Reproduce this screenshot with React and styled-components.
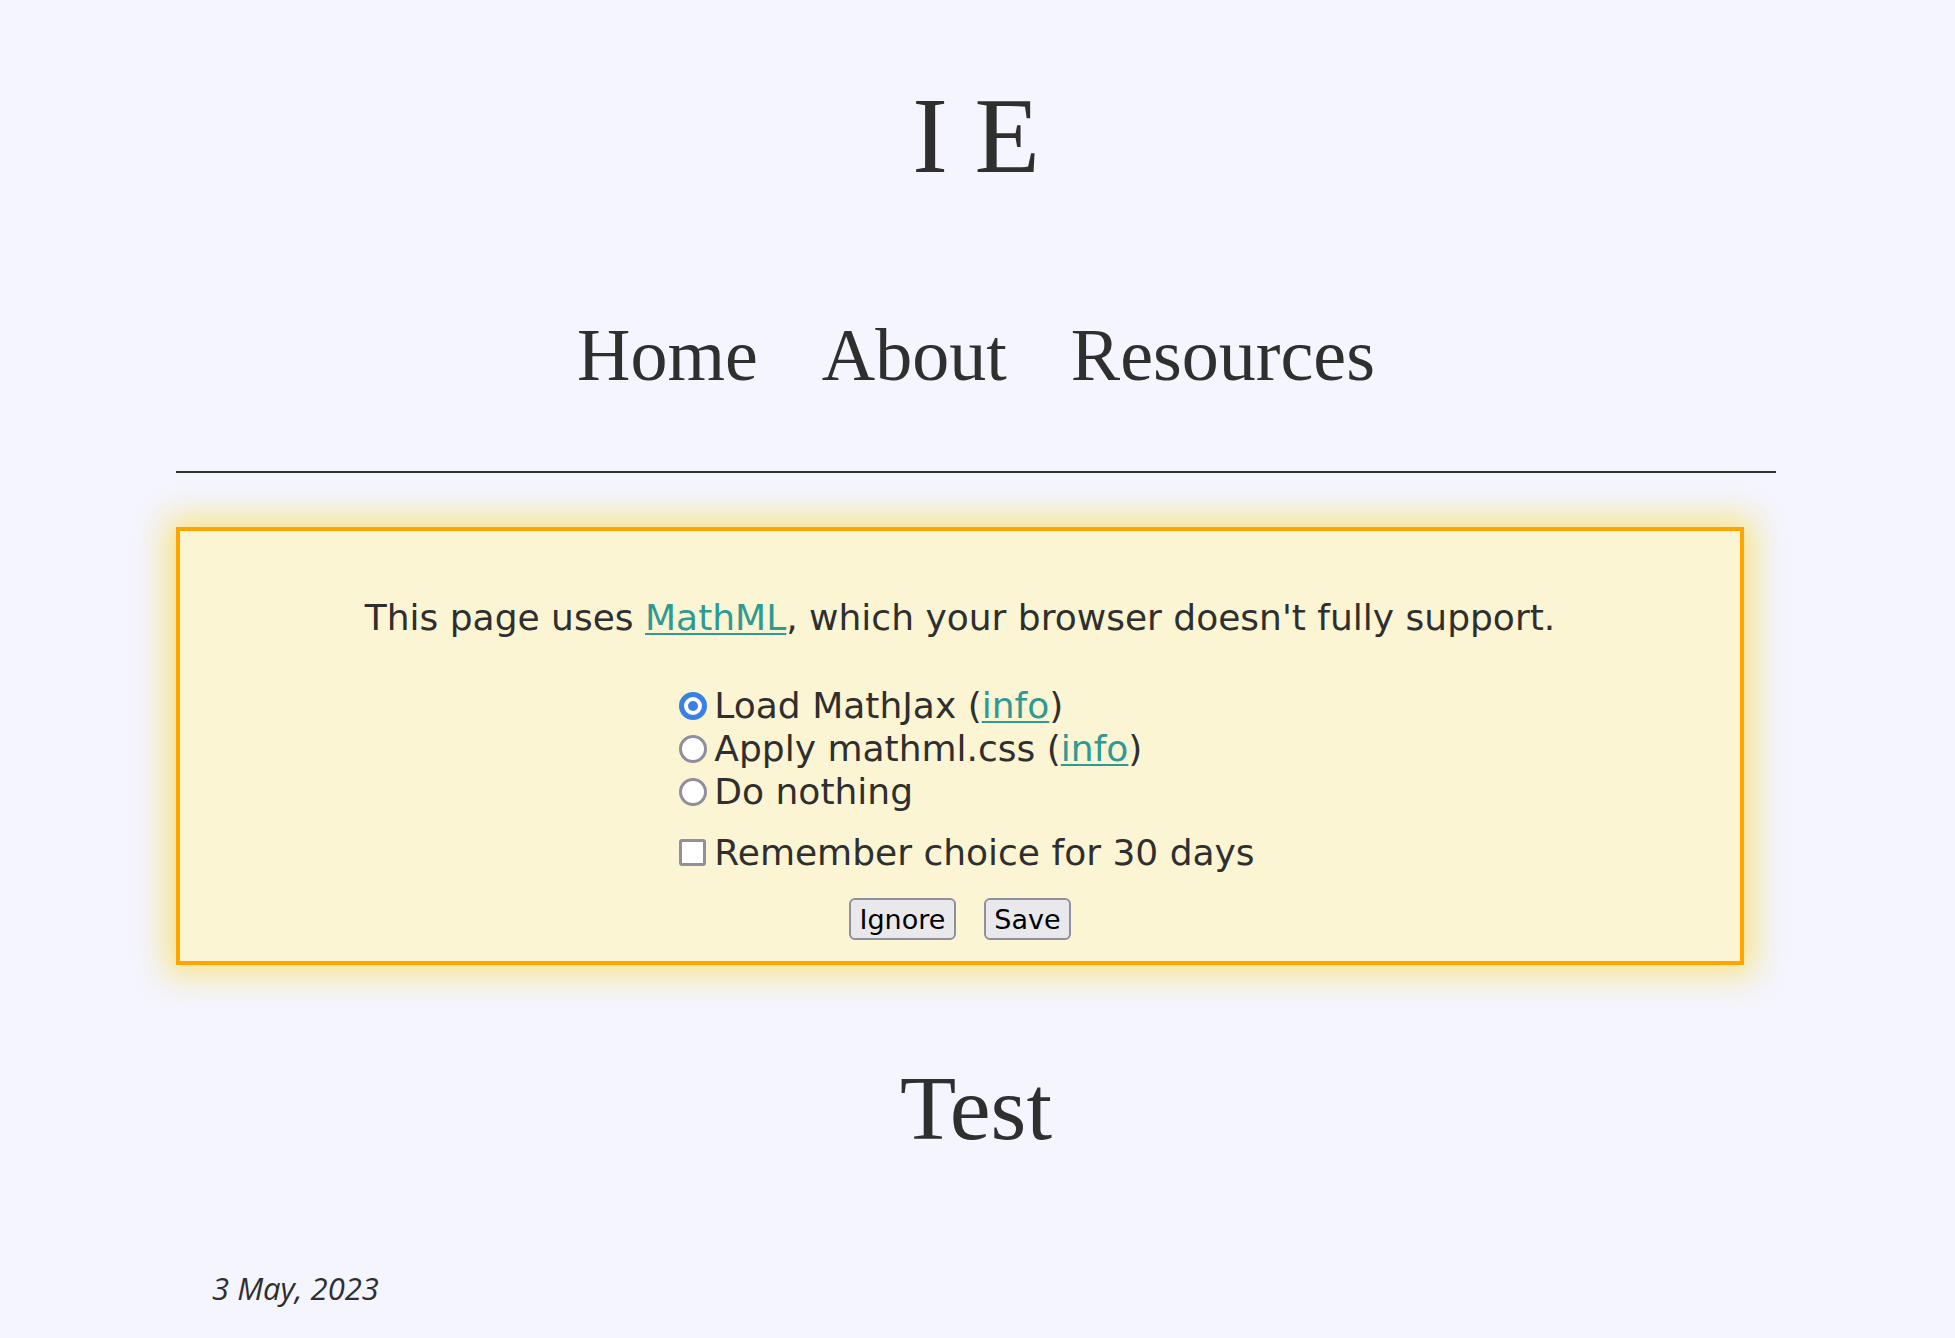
import React from "react";
import styled, { createGlobalStyle } from "styled-components";

const Global = createGlobalStyle`
  html, body { margin: 0; padding: 0; background: #f4f5fe; }
  body { color: #2f2f2f; font-family: "DejaVu Sans", sans-serif; }
`;

const Page = styled.div`
  width: 1600px;
  margin: 0 0 0 calc(50% - 801.5px);
  padding: 83px 0 40px;
  box-sizing: border-box;
`;

const Title = styled.h1`
  margin: 0;
  font-family: "Liberation Serif", serif;
  font-weight: normal;
  font-size: 107px;
  line-height: 1;
  text-align: center;
  color: #2f2f2f;
`;

const Nav = styled.nav`
  display: flex;
  justify-content: center;
  gap: 64px;
  margin-top: 128px;
`;

const NavLink = styled.a`
  font-family: "Liberation Serif", serif;
  font-size: 74px;
  line-height: 1;
  color: #2f2f2f;
  text-decoration: none;
`;

const Rule = styled.hr`
  margin: 79px 0 0;
  border: 0;
  border-top: 2px solid #2f2f2f;
  height: 0;
`;

const Notice = styled.section`
  margin: 54px 32px 0 0;
  border: 4px solid #ffa500;
  background: #fcf5d4;
  box-shadow: 0 0 30px 10px rgba(248, 222, 96, 0.75);
  padding: 65px 0 21px;
  text-align: center;
  font-size: 36px;
  line-height: 43px;
`;

const Message = styled.p`
  margin: 0;
`;

const Link = styled.a`
  color: #2e9a93;
  text-decoration: underline;
  text-underline-offset: 3px;
  text-decoration-thickness: 2px;
`;

const Options = styled.div`
  display: inline-block;
  text-align: left;
  margin-top: 45px;
  padding-left: 14px;
`;

const OptionRow = styled.label`
  display: flex;
  align-items: center;
  height: 43px;
`;

const Radio = styled.span`
  display: inline-block;
  box-sizing: border-box;
  width: 28px;
  height: 28px;
  margin-right: 7px;
  border-radius: 50%;
  background: #fff;
  border: ${(p) => (p.$checked ? "5px solid #3a7fe3" : "3.5px solid #8f8f9d")};
  position: relative;
  flex: none;
  &::after {
    content: "";
    display: ${(p) => (p.$checked ? "block" : "none")};
    position: absolute;
    left: 50%;
    top: 50%;
    width: 10px;
    height: 10px;
    border-radius: 50%;
    background: #3a7fe3;
    transform: translate(-50%, -50%);
  }
`;

const Check = styled.span`
  display: inline-block;
  box-sizing: border-box;
  width: 27px;
  height: 27px;
  margin-right: 8px;
  border: 3.5px solid #8f8f9d;
  border-radius: 3px;
  background: #fff;
  flex: none;
`;

const RememberRow = styled(OptionRow)`
  margin-top: 18px;
`;

const Buttons = styled.div`
  display: flex;
  justify-content: center;
  gap: 28px;
  margin-top: 23px;
`;

const Button = styled.button`
  box-sizing: border-box;
  height: 42px;
  padding: 0 8.5px;
  font-family: "DejaVu Sans", sans-serif;
  font-size: 27px;
  line-height: 1;
  color: #000;
  background: #e9e9ed;
  border: 2px solid #8f8f9d;
  border-radius: 6px;
`;

const PostTitle = styled.h2`
  margin: 97px 0 0;
  font-family: "Liberation Serif", serif;
  font-weight: normal;
  font-size: 92px;
  line-height: 1;
  text-align: center;
  color: #2f2f2f;
`;

const PostDate = styled.p`
  margin: 119px 0 0;
  padding-left: 36px;
  font-family: "Open Sans", sans-serif;
  font-style: italic;
  font-size: 31px;
  line-height: 1;
  color: #2f2f2f;
`;

export default function App() {
  return (
    <>
      <Global />
      <Page>
        <Title>I E</Title>
        <Nav>
          <NavLink href="#">Home</NavLink>
          <NavLink href="#">About</NavLink>
          <NavLink href="#">Resources</NavLink>
        </Nav>
        <Rule />
        <Notice>
          <Message>
            This page uses <Link href="#">MathML</Link>, which your browser doesn't fully support.
          </Message>
          <Options>
            <OptionRow>
              <Radio $checked />
              <span>
                Load MathJax (<Link href="#">info</Link>)
              </span>
            </OptionRow>
            <OptionRow>
              <Radio />
              <span>
                Apply mathml.css (<Link href="#">info</Link>)
              </span>
            </OptionRow>
            <OptionRow>
              <Radio />
              <span>Do nothing</span>
            </OptionRow>
            <RememberRow>
              <Check />
              <span>Remember choice for 30 days</span>
            </RememberRow>
          </Options>
          <Buttons>
            <Button>Ignore</Button>
            <Button>Save</Button>
          </Buttons>
        </Notice>
        <PostTitle>Test</PostTitle>
        <PostDate>3 May, 2023</PostDate>
      </Page>
    </>
  );
}
